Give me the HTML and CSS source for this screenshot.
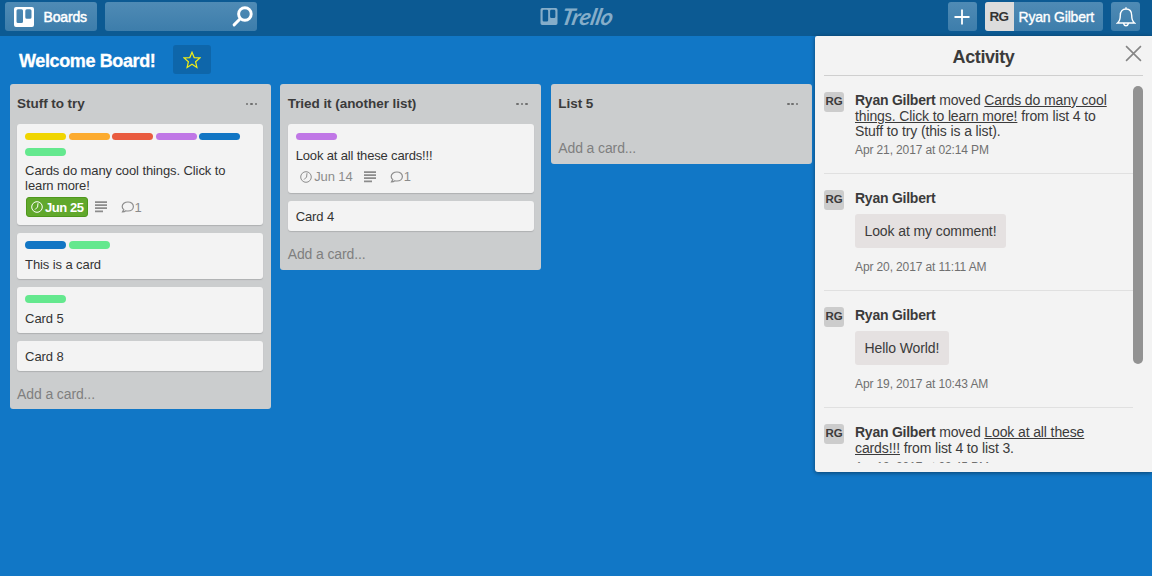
FILE: index.html
```html
<!DOCTYPE html>
<html lang="en">
<head>
<meta charset="utf-8">
<title>Welcome Board!</title>
<link rel="stylesheet" href="styles.css">
</head>
<body>
<svg class="defs" aria-hidden="true">
  <symbol id="clock" viewBox="0 0 12 12"><circle cx="6" cy="6" r="5.3"/><path d="M7 2.2 6.6 6 4 8.6"/></symbol>
  <symbol id="lines" viewBox="0 0 12 12"><path d="M0 1.2h12M0 4.2h12M0 7.2h12M0 10.4h8"/></symbol>
  <symbol id="bubble" viewBox="0 0 13 12"><path d="M7 1C3.700 1 1.200 2.900 1.200 5.400c0 1.300.7 2.400 1.600 3.200L1.500 10.900c1.500 0 2.500-.4 3.300-1.100.7.2 1.400.2 2.200.2 3.100 0 5.400-2 5.400-4.500S10.100 1 7 1z"/></symbol>
  <symbol id="board" viewBox="0 0 20 20"><path fill-rule="evenodd" d="M2 0h16a2 2 0 0 1 2 2v16a2 2 0 0 1-2 2H2a2 2 0 0 1-2-2V2a2 2 0 0 1 2-2zM4 2.200a1.500 1.500 0 0 0-1.500 1.500v10.800A1.500 1.500 0 0 0 4 16h3.500A1.500 1.500 0 0 0 9 14.500V3.700a1.500 1.500 0 0 0-1.500-1.500zM12.800 2.200a1.500 1.500 0 0 0-1.500 1.500v6.500a1.500 1.500 0 0 0 1.500 1.500h3.200a1.500 1.500 0 0 0 1.500-1.500V3.700a1.500 1.500 0 0 0-1.500-1.500z"/></symbol>
</svg>
<header class="topbar">
  <div class="side">
    <a class="btn boards"><svg><use href="#board"/></svg><span class="boards-text">Boards</span></a>
    <div class="btn search"><svg viewBox="0 0 20 20"><circle cx="12.300" cy="7.600" r="6"/><path d="M7.800 12.200 2 18"/></svg></div>
  </div>
  <div class="logo"><svg><use href="#board"/></svg><span class="wordmark">Trello</span></div>
  <div class="side right">
    <a class="btn square"><svg viewBox="0 0 16 16"><path d="M8 0.500v15M0.500 8h15"/></svg></a>
    <a class="btn member"><span class="initials">RG</span><span class="member-name">Ryan Gilbert</span></a>
    <a class="btn square bell"><svg viewBox="0 0 20 20"><path d="M1.500 16C4 14 4.300 12 4.300 8.500 4.300 4.500 6.500 2 10 2s5.700 2.500 5.700 6.500c0 3.500.3 5.500 2.800 7.500zM10 2V.3M7.600 16.500c.3 1.400 1.200 2.200 2.400 2.200s2.100-.8 2.400-2.200"/></svg></a>
  </div>
</header>
<div class="board-header">
  <h1 class="board-title">Welcome Board!</h1>
  <a class="star"><svg viewBox="0 0 18 18"><path d="M9 1.200 11.200 6.600 16.900 6.900 12.600 10.700 13.900 16.400 9 13.300 4.100 16.400 5.400 10.700 1.100 6.900 6.800 6.600z"/></svg></a>
</div>
<main class="lists">
  <section class="list">
    <div class="list-head"><h2>Stuff to try</h2><span class="dots"><i></i><i></i><i></i></span></div>
    <div class="cards">
      <article class="card">
        <div class="labels two-rows"><i class="yellow"></i><i class="orange"></i><i class="red"></i><i class="purple"></i><i class="blue"></i><i class="green"></i></div>
        <p>Cards do many cool things. Click to<br>learn more!</p>
        <div class="badges tall"><span class="due done"><svg><use href="#clock"/></svg><b>Jun 25</b></span><svg class="desc"><use href="#lines"/></svg><svg class="comment"><use href="#bubble"/></svg><span>1</span></div>
      </article>
      <article class="card"><div class="labels"><i class="blue"></i><i class="green"></i></div><p>This is a card</p></article>
      <article class="card"><div class="labels"><i class="green"></i></div><p>Card 5</p></article>
      <article class="card"><p>Card 8</p></article>
    </div>
    <a class="add"><span>Add a card...</span></a>
  </section>
  <section class="list">
    <div class="list-head"><h2>Tried it (another list)</h2><span class="dots"><i></i><i></i><i></i></span></div>
    <div class="cards">
      <article class="card">
        <div class="labels"><i class="purple"></i></div>
        <p class="tight">Look at all these cards!!!</p>
        <div class="badges"><span class="due"><svg><use href="#clock"/></svg><span>Jun 14</span></span><svg class="desc"><use href="#lines"/></svg><svg class="comment"><use href="#bubble"/></svg><span>1</span></div>
      </article>
      <article class="card"><p>Card 4</p></article>
    </div>
    <a class="add"><span>Add a card...</span></a>
  </section>
  <section class="list">
    <div class="list-head"><h2>List 5</h2><span class="dots"><i></i><i></i><i></i></span></div>
    <div class="cards empty"></div>
    <a class="add"><span>Add a card...</span></a>
  </section>
</main>
<aside class="panel">
  <div class="panel-head"><h2>Activity</h2><svg class="close" viewBox="0 0 16 16"><path d="M1 1l14 14M15 1 1 15"/></svg></div>
  <div class="scroll">
    <div class="feed">
      <div class="entry">
        <span class="avatar">RG</span>
        <div class="body"><p><b>Ryan Gilbert</b> moved <u>Cards do many cool</u><br><u>things. Click to learn more!</u> from list 4 to<br>Stuff to try (this is a list).</p><time>Apr 21, 2017 at 02:14 PM</time></div>
      </div>
      <div class="entry">
        <span class="avatar">RG</span>
        <div class="body"><p><b>Ryan Gilbert</b></p><div class="quote">Look at my comment!</div><time>Apr 20, 2017 at 11:11 AM</time></div>
      </div>
      <div class="entry">
        <span class="avatar">RG</span>
        <div class="body"><p><b>Ryan Gilbert</b></p><div class="quote">Hello World!</div><time>Apr 19, 2017 at 10:43 AM</time></div>
      </div>
      <div class="entry">
        <span class="avatar">RG</span>
        <div class="body"><p><b>Ryan Gilbert</b> moved <u>Look at all these</u><br><u>cards!!!</u> from list 4 to list 3.</p><time>Apr 19, 2017 at 09:45 PM</time></div>
      </div>
    </div>
    <div class="thumb"></div>
  </div>
</aside>
</body>
</html>
```
FILE: styles.css
```css
* { box-sizing: border-box; }
body { margin: 0; height: 576px; overflow: hidden; position: relative; background: #1177c6; color: #3b3b3b; font-family: "Liberation Sans", Arial, sans-serif; font-size: 13px; white-space: nowrap; }
h1, h2, p { margin: 0; }
svg { display: block; fill: none; stroke: currentColor; flex: none; }
.defs { position: absolute; width: 0; height: 0; }

.topbar { height: 36px; padding: 2px 12px 0 5px; display: flex; align-items: flex-start; background: #0c5a93; color: #fff; }
.side { flex: 1; display: flex; gap: 8px; }
.right { justify-content: flex-end; }
.btn { height: 29px; border-radius: 3px; display: flex; align-items: center; background: linear-gradient(#4f8bb5, #3d7dab); }
.boards { width: 91.500px; padding-left: 9px; gap: 9.500px; font-size: 14px; }
.boards svg { width: 20px; height: 20px; fill: #fff; stroke: none; }
.boards-text { letter-spacing: -0.150px; -webkit-text-stroke: 0.500px; }
.search { width: 152px; justify-content: flex-end; padding-right: 4px; }
.search svg { width: 21px; height: 21px; stroke-width: 2.800; stroke-linecap: round; }
.logo { display: flex; align-items: center; gap: 4px; height: 29px; color: #85adc9; margin-left: 9px; }
.logo svg { width: 18px; height: 17px; fill: currentColor; stroke: none; }
.wordmark { font: italic bold 23px/27px Lato, sans-serif; letter-spacing: -0.300px; width: 53px; transform: skewX(-12deg); }
.square { width: 29px; justify-content: center; }
.square svg { width: 16px; height: 16px; stroke-width: 1.800; }
.bell svg { width: 20px; height: 20px; stroke-width: 1.400; }
.member { width: 118.500px; overflow: hidden; }
.initials { width: 29px; height: 29px; line-height: 29px; text-align: center; background: #dcdcdc; color: #333; font-weight: bold; font-size: 13.500px; letter-spacing: -0.500px; }
.member-name { margin-left: 5px; font-size: 14px; letter-spacing: -0.200px; -webkit-text-stroke: 0.350px; }

.board-header { height: 48px; padding: 9px 0 0 19px; display: flex; }
.board-title { width: 154px; line-height: 32px; font-size: 18px; color: #fff; letter-spacing: -0.380px; -webkit-text-stroke: 0.300px; }
.star { width: 38px; height: 29px; border-radius: 3px; background: #0e66aa; color: #f2ee16; display: grid; place-items: center; }
.star svg { width: 18px; height: 18px; stroke-width: 1.200; }

.lists { display: flex; align-items: flex-start; gap: 9.600px; padding-left: 9.600px; }
.list { width: 261px; padding: 0 7.500px; background: #cbcdce; border-radius: 3px; }
.list-head { height: 40px; display: flex; align-items: center; justify-content: space-between; padding: 0 6px 1px 0; }
.list-head h2 { font-size: 13.500px; letter-spacing: -0.050px; }
.dots { display: flex; gap: 1.800px; padding-top: 1px; }
.dots i { width: 2.600px; height: 2.600px; border-radius: 50%; background: #6e6e6e; }
.cards { display: flex; flex-direction: column; gap: 8px; }
.card { min-height: 30px; padding: 8px 8px 7px; background: #f3f3f3; border-radius: 3px; box-shadow: 0 1px 1px #afb1b2; color: #333; line-height: 15px; letter-spacing: -0.100px; }
.labels { display: flex; flex-wrap: wrap; gap: 8px 2.500px; margin-bottom: 8px; padding-top: 0.500px; }
.two-rows { margin-bottom: 7px; }
.tight { letter-spacing: -0.160px; }
.labels i { width: 41px; height: 7.500px; border-radius: 4px; }
.yellow { background: #f0d500; }
.orange { background: #fcab2f; }
.red { background: #e95b3f; }
.purple { background: #c077e6; }
.blue { background: #1276c4; }
.green { background: #64e88e; }
.badges { display: flex; align-items: center; height: 20px; margin: 3.500px 0 -0.500px; color: #8c8c8c; }
.tall { margin: 4.500px 0 0.500px; }
.due { display: flex; align-items: center; gap: 2px; height: 20px; width: 63px; padding-left: 4.500px; margin-right: 5.500px; }
.due svg { width: 12px; height: 12px; }
.done { background: #61a82c; border: 1px solid #4f971c; border-radius: 3px; color: #fff; margin-left: 1px; width: 62px; padding-left: 4px; margin-right: 7px; letter-spacing: -0.450px; }
.desc { width: 12px; height: 12px; stroke-width: 1.800; }
.comment { width: 13px; height: 12px; margin: 0 1px 0 13.500px; stroke-width: 1.200; }
.add { display: flex; height: 38.500px; padding-top: 15px; line-height: 16px; font-size: 14px; letter-spacing: -0.120px; color: #7f7f7f; }
.empty { height: 0; margin-top: 1px; }

.panel { position: absolute; left: 815px; top: 36px; width: 337px; height: 436px; background: #f3f3f3; box-shadow: 0 1px 4px rgba(0, 0, 0, .45); border-radius: 2px 0 0 3px; padding: 0 9px; }
.panel-head { height: 40px; border-bottom: 1px solid #cfcfcf; display: grid; place-items: center; padding-top: 3px; position: relative; }
.panel-head h2 { font-size: 18px; letter-spacing: -0.400px; }
.close { position: absolute; right: 1px; top: 9px; width: 17px; height: 17px; color: #858585; stroke-width: 1.500; }
.scroll { display: flex; height: 387px; overflow: hidden; }
.feed { width: 309px; }
.thumb { width: 10px; height: 278px; border-radius: 5px; background: #929292; margin-top: 10px; }
.entry { display: flex; gap: 11px; height: 117px; padding-top: 16px; border-bottom: 1px solid #e0e0e0; font-size: 14px; line-height: 15.500px; letter-spacing: -0.120px; }
.entry:first-child { height: 98px; }
.entry b { letter-spacing: -0.240px; }
.avatar { width: 20px; height: 20px; line-height: 19px; background: #ccc; border-radius: 3px; text-align: center; font-size: 11.500px; font-weight: bold; }
.body { padding-top: 1px; }
.quote { width: max-content; height: 34px; line-height: 34px; margin: 7px 0 11px; padding: 0 9.500px; background: #e5e1e1; border-radius: 3px; letter-spacing: -0.100px; }
.entry time { display: block; font-size: 12px; line-height: 16px; margin-top: 3px; color: #707070; }
.entry:first-child time { margin-top: 2.500px; }
```
